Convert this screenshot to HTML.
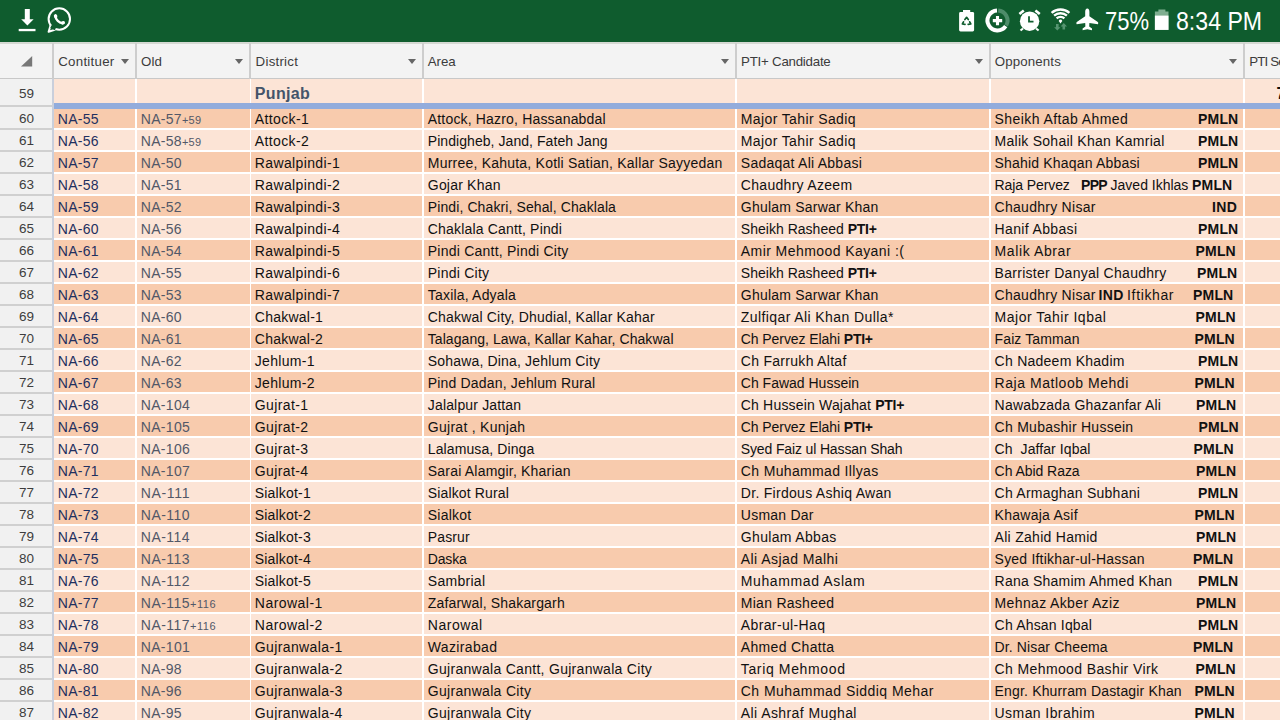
<!DOCTYPE html>
<html><head><meta charset="utf-8"><title>Sheet</title>
<style>
html,body{margin:0;padding:0}
body{width:1280px;height:720px;overflow:hidden;position:relative;background:#fff;font-family:"Liberation Sans",sans-serif;}
div,span,svg{position:absolute;white-space:pre}
span span{position:static}
.sb{left:0;top:0;width:1280px;height:41.7px;background:#0f5c2e}
.sl{left:0;top:41.7px;width:1280px;height:1.9px;background:#d4d8d2}
.st{color:#fff;font-size:25px;line-height:30px;top:6px;transform-origin:0 50%}
.hd,.hs,.ht,.ar,.sl{z-index:2}
.hd{left:0;top:42px;width:1280px;height:36px;background:#f3f3f3;border-bottom:1.5px solid #c8c8c8;box-sizing:content-box}
.hs{top:43px;width:2px;height:36px;background:#cdcdcd}
.ht{top:43px;height:36px;line-height:37px;font-size:13.3px;color:#3c3c3c}
.ar{top:58.5px;width:0;height:0;border-left:4.3px solid transparent;border-right:4.3px solid transparent;border-top:5px solid #666}
.rh{left:0;top:78px;width:52px;height:642px;background:#f1f1f1}
.rb{left:52px;top:79px;width:2px;height:641px;background:#c9cfdc}
.rn{left:0;width:53px;text-align:center;font-size:13.5px;color:#3d3d3d;height:22px;line-height:22px}
.rl{left:0;width:52px;height:2px;background:#d0d0d0}
.r{left:54px;width:1226px;height:20px}
.d{background:#f8cbad}
.l{background:#fce4d6}
.vs{top:79px;width:2px;height:641px;background:#fff}
.c{top:-0.1px;height:22px;line-height:22px;font-size:14.0px;color:#111}
.a{color:#1f3060}
.o{color:#525868}
.b{font-weight:bold}
.s{font-size:11.0px}
</style></head><body>

<div class="sb"></div>
<svg style="left:0;top:0" width="1280" height="42" viewBox="0 0 1280 42">
<g fill="#fff">
<rect x="24.8" y="9" width="5" height="11"/><path d="M21.2 19.2H33.6L27.4 25.5z"/><rect x="18.7" y="28.9" width="16.8" height="2.3"/>
</g>
<g fill="none" stroke="#fff">
<circle cx="59.3" cy="19" r="10.7" stroke-width="2"/>
<path d="M50.6 25.2L48.6 31.8L55.4 29.6" stroke-width="2" stroke-linejoin="round" fill="#0f5c2e"/>
<path d="M55.4 16.2C55.6 19.6 59 23 63 23.2" stroke-width="2.3" stroke-linecap="round"/>
</g>
<rect x="51" y="24" width="5" height="5" fill="#0f5c2e" transform="rotate(28 53 27)"/>
<ellipse cx="55.6" cy="16.2" rx="1.7" ry="2.1" fill="#fff" transform="rotate(-20 55.6 16.2)"/>
<ellipse cx="63" cy="22.8" rx="2.1" ry="1.7" fill="#fff" transform="rotate(-25 63 22.8)"/>
<g fill="#fff">
<rect x="959.1" y="12" width="15" height="19.5" rx="1.4"/><rect x="963" y="10" width="7.2" height="3"/>
</g>
<g fill="none" stroke="#0f5c2e" stroke-width="1.7" stroke-linejoin="round" stroke-linecap="round">
<path d="M964.900 19.500L966.600 17.300L968.300 19.500"/>
<path d="M963.500 21.800L962.400 24L965 24.300"/>
<path d="M969.700 21.800L970.800 24L968.200 24.300"/>
</g>
<g fill="none" stroke-width="4">
<path d="M1005.7 26.2A10 10 0 1 1 997 10.5" stroke="#fff"/>
<path d="M998.2 10.5A10 10 0 0 1 1006.2 25.4" stroke="#4d8c69"/>
</g>
<path d="M992.8 20.6H1002.2M997.5 15.9V25.3" stroke="#fff" stroke-width="3.1" fill="none"/>
<g>
<circle cx="1029.6" cy="21.2" r="9.7" fill="#fff"/>
<path d="M1019.4 14L1023.8 10.5M1035.4 10.5L1039.8 14.1" stroke="#fff" stroke-width="2.6" fill="none"/>
<path d="M1020.5 30.6L1023 28.4M1038.6 30.6L1036.1 28.4" stroke="#fff" stroke-width="2" fill="none"/>
<path d="M1029 16.2V21.6H1033.5" stroke="#0f5c2e" stroke-width="1.8" fill="none"/>
</g>
<g fill="none" stroke="#fff" stroke-width="2.4">
<path d="M1051.6 12.9A13.3 13.3 0 0 1 1069.4 12.9"/>
<path d="M1054.1 15.7A9.6 9.6 0 0 1 1066.9 15.7"/>
<path d="M1056.6 18.4A5.9 5.9 0 0 1 1064.4 18.4"/>
</g>
<path d="M1058.7 20.9A1.9 1.9 0 0 1 1062.3 20.9L1060.5 23.4z" fill="#fff"/>
<g fill="#559470"><path d="M1056 24h2.6v3.200h1.900l-3.200 3.300-3.200-3.300h1.900z"/><path d="M1062.500 29.600h2.600v-3.200h1.900l-3.200-3.300-3.200 3.300h1.900z"/></g>
<path fill="#fff" d="M1087.3 8.600C1088.700 8.600 1089.400 10.200 1089.400 11.800L1089.400 16.200L1097.800 21.900Q1098.800 22.800 1097.900 24.200L1089.400 22.900L1089.200 26.400L1092 28.600L1092 30.200L1087.300 29.200L1082.600 30.200L1082.600 28.600L1085.400 26.400L1085.200 22.900L1076.700 24.200Q1075.800 22.800 1076.800 21.900L1085.200 16.200L1085.200 11.800C1085.200 10.200 1085.900 8.600 1087.300 8.600Z"/>
<rect x="1158.4" y="9.5" width="7" height="3" fill="#7fae90"/>
<rect x="1154.9" y="11.5" width="13.6" height="18.4" fill="#7fae90"/>
<rect x="1154.9" y="15.6" width="13.6" height="14.3" fill="#fff"/>
</svg>
<span class="st" style="left:1105px;transform:scaleX(.88)">75%</span>
<span class="st" style="left:1176px;transform:scaleX(.925)">8:34 PM</span>
<div class="hd"></div><div class="sl"></div>
<div class="hs" style="left:52px"></div>
<div class="hs" style="left:135px"></div>
<div class="hs" style="left:249.3px"></div>
<div class="hs" style="left:422px"></div>
<div class="hs" style="left:735px"></div>
<div class="hs" style="left:989px"></div>
<div class="hs" style="left:1243px"></div>
<svg style="left:21px;top:56.4px;z-index:3" width="12" height="11" viewBox="0 0 12 11"><path d="M11.200 0V10.400H0z" fill="#777"/></svg>
<span class="ht" style="left:58.2px"><span style="letter-spacing:0.27px">Contituer</span></span>
<div class="ar" style="left:121.0px"></div>
<span class="ht" style="left:141.1px"><span style="letter-spacing:0.04px">Old</span></span>
<div class="ar" style="left:234.8px"></div>
<span class="ht" style="left:255.6px"><span style="letter-spacing:0.24px">District</span></span>
<div class="ar" style="left:408.0px"></div>
<span class="ht" style="left:427.8px"><span style="letter-spacing:-0.08px">Area</span></span>
<div class="ar" style="left:721.0px"></div>
<span class="ht" style="left:741.1px"><span style="letter-spacing:-0.24px">PTI+ Candidate</span></span>
<div class="ar" style="left:975.0px"></div>
<span class="ht" style="left:994.8px"><span style="letter-spacing:0.12px">Opponents</span></span>
<div class="ar" style="left:1228.6px"></div>
<span class="ht" style="left:1249.2px"><span style="letter-spacing:-0.82px">PTI Se</span></span>
<div class="rh"></div><div class="rb"></div>
<div class="r l" style="top:79px;height:24.5px"><span class="c b" style="left:200.8px;top:3.5px;font-size:16.0px;color:#44546a;letter-spacing:0.35px">Punjab</span><span class="c b" style="left:1222.6px;top:3.5px;font-size:16.0px">7</span></div>
<span class="rn" style="top:83px">59</span>
<div class="rl" style="top:104.7px"></div>
<div class="r d" style="top:108.2px"><span class="c a" style="left:3.8px"><span style="letter-spacing:0.28px">NA-55</span></span><span class="c o" style="left:86.8px"><span style="letter-spacing:0.28px">NA-57</span><span class="s" style="letter-spacing:0.28px">+59</span></span><span class="c" style="left:200.8px"><span style="letter-spacing:0.38px">Attock-1</span></span><span class="c" style="left:373.8px"><span style="letter-spacing:0.17px">Attock, Hazro, Hassanabdal</span></span><span class="c" style="left:686.8px"><span style="letter-spacing:0.38px">Major Tahir Sadiq</span></span><span class="c" style="left:940.6px"><span style="letter-spacing:0.42px">Sheikh Aftab Ahmed</span></span><span class="c" style="left:1144.1px"><span class="b" style="letter-spacing:0.15px">PMLN</span></span></div>
<span class="rn" style="top:108.2px">60</span>
<div class="rl" style="top:128.0px"></div>
<div class="r l" style="top:130.2px"><span class="c a" style="left:3.8px"><span style="letter-spacing:0.28px">NA-56</span></span><span class="c o" style="left:86.8px"><span style="letter-spacing:0.28px">NA-58</span><span class="s" style="letter-spacing:0.28px">+59</span></span><span class="c" style="left:200.8px"><span style="letter-spacing:0.38px">Attock-2</span></span><span class="c" style="left:373.8px"><span style="letter-spacing:0.06px">Pindigheb, Jand, Fateh Jang</span></span><span class="c" style="left:686.8px"><span style="letter-spacing:0.38px">Major Tahir Sadiq</span></span><span class="c" style="left:940.6px"><span style="letter-spacing:0.26px">Malik Sohail Khan Kamrial</span></span><span class="c" style="left:1144.1px"><span class="b" style="letter-spacing:0.15px">PMLN</span></span></div>
<span class="rn" style="top:130.2px">61</span>
<div class="rl" style="top:150.0px"></div>
<div class="r d" style="top:152.2px"><span class="c a" style="left:3.8px"><span style="letter-spacing:0.28px">NA-57</span></span><span class="c o" style="left:86.8px"><span style="letter-spacing:0.28px">NA-50</span></span><span class="c" style="left:200.8px"><span style="letter-spacing:0.37px">Rawalpindi-1</span></span><span class="c" style="left:373.8px"><span style="letter-spacing:0.22px">Murree, Kahuta, Kotli Satian, Kallar Sayyedan</span></span><span class="c" style="left:686.8px"><span style="letter-spacing:0.25px">Sadaqat Ali Abbasi</span></span><span class="c" style="left:940.6px"><span style="letter-spacing:0.18px">Shahid Khaqan Abbasi</span></span><span class="c" style="left:1144.1px"><span class="b" style="letter-spacing:0.15px">PMLN</span></span></div>
<span class="rn" style="top:152.2px">62</span>
<div class="rl" style="top:172.0px"></div>
<div class="r l" style="top:174.2px"><span class="c a" style="left:3.8px"><span style="letter-spacing:0.28px">NA-58</span></span><span class="c o" style="left:86.8px"><span style="letter-spacing:0.28px">NA-51</span></span><span class="c" style="left:200.8px"><span style="letter-spacing:0.37px">Rawalpindi-2</span></span><span class="c" style="left:373.8px"><span style="letter-spacing:0.2px">Gojar Khan</span></span><span class="c" style="left:686.8px"><span style="letter-spacing:0.3px">Chaudhry Azeem</span></span><span class="c" style="left:940.6px"><span style="letter-spacing:-0.1px">Raja Pervez</span></span><span class="c" style="left:1027.1px"><span class="b" style="letter-spacing:-0.72px">PPP</span></span><span class="c" style="left:1056.6px"><span style="letter-spacing:-0.01px">Javed Ikhlas</span></span><span class="c" style="left:1138.1px"><span class="b" style="letter-spacing:0.15px">PMLN</span></span></div>
<span class="rn" style="top:174.2px">63</span>
<div class="rl" style="top:194.0px"></div>
<div class="r d" style="top:196.2px"><span class="c a" style="left:3.8px"><span style="letter-spacing:0.28px">NA-59</span></span><span class="c o" style="left:86.8px"><span style="letter-spacing:0.28px">NA-52</span></span><span class="c" style="left:200.8px"><span style="letter-spacing:0.37px">Rawalpindi-3</span></span><span class="c" style="left:373.8px"><span style="letter-spacing:0.1px">Pindi, Chakri, Sehal, Chaklala</span></span><span class="c" style="left:686.8px"><span style="letter-spacing:0.22px">Ghulam Sarwar Khan</span></span><span class="c" style="left:940.6px"><span style="letter-spacing:0.27px">Chaudhry Nisar</span></span><span class="c" style="left:1158.1px"><span class="b" style="letter-spacing:0.35px">IND</span></span></div>
<span class="rn" style="top:196.2px">64</span>
<div class="rl" style="top:216.0px"></div>
<div class="r l" style="top:218.2px"><span class="c a" style="left:3.8px"><span style="letter-spacing:0.28px">NA-60</span></span><span class="c o" style="left:86.8px"><span style="letter-spacing:0.28px">NA-56</span></span><span class="c" style="left:200.8px"><span style="letter-spacing:0.37px">Rawalpindi-4</span></span><span class="c" style="left:373.8px"><span style="letter-spacing:0.17px">Chaklala Cantt, Pindi</span></span><span class="c" style="left:686.8px"><span style="letter-spacing:0.02px">Sheikh Rasheed </span><span class="b" style="letter-spacing:-0.25px">PTI+</span></span><span class="c" style="left:940.6px"><span style="letter-spacing:0.35px">Hanif Abbasi</span></span><span class="c" style="left:1144.1px"><span class="b" style="letter-spacing:0.15px">PMLN</span></span></div>
<span class="rn" style="top:218.2px">65</span>
<div class="rl" style="top:238.0px"></div>
<div class="r d" style="top:240.2px"><span class="c a" style="left:3.8px"><span style="letter-spacing:0.28px">NA-61</span></span><span class="c o" style="left:86.8px"><span style="letter-spacing:0.28px">NA-54</span></span><span class="c" style="left:200.8px"><span style="letter-spacing:0.37px">Rawalpindi-5</span></span><span class="c" style="left:373.8px"><span style="letter-spacing:0.23px">Pindi Cantt, Pindi City</span></span><span class="c" style="left:686.8px"><span style="letter-spacing:0.43px">Amir Mehmood Kayani :(</span></span><span class="c" style="left:940.6px"><span style="letter-spacing:0.6px">Malik Abrar</span></span><span class="c" style="left:1141.6px"><span class="b" style="letter-spacing:0.15px">PMLN</span></span></div>
<span class="rn" style="top:240.2px">66</span>
<div class="rl" style="top:260.0px"></div>
<div class="r l" style="top:262.2px"><span class="c a" style="left:3.8px"><span style="letter-spacing:0.28px">NA-62</span></span><span class="c o" style="left:86.8px"><span style="letter-spacing:0.28px">NA-55</span></span><span class="c" style="left:200.8px"><span style="letter-spacing:0.37px">Rawalpindi-6</span></span><span class="c" style="left:373.8px"><span style="letter-spacing:0.24px">Pindi City</span></span><span class="c" style="left:686.8px"><span style="letter-spacing:0.02px">Sheikh Rasheed </span><span class="b" style="letter-spacing:-0.25px">PTI+</span></span><span class="c" style="left:940.6px"><span style="letter-spacing:0.28px">Barrister Danyal Chaudhry</span></span><span class="c" style="left:1143.1px"><span class="b" style="letter-spacing:0.15px">PMLN</span></span></div>
<span class="rn" style="top:262.2px">67</span>
<div class="rl" style="top:282.0px"></div>
<div class="r d" style="top:284.2px"><span class="c a" style="left:3.8px"><span style="letter-spacing:0.28px">NA-63</span></span><span class="c o" style="left:86.8px"><span style="letter-spacing:0.28px">NA-53</span></span><span class="c" style="left:200.8px"><span style="letter-spacing:0.37px">Rawalpindi-7</span></span><span class="c" style="left:373.8px"><span style="letter-spacing:0.19px">Taxila, Adyala</span></span><span class="c" style="left:686.8px"><span style="letter-spacing:0.22px">Ghulam Sarwar Khan</span></span><span class="c" style="left:940.6px"><span style="letter-spacing:0.27px">Chaudhry Nisar</span></span><span class="c" style="left:1044.6px"><span class="b" style="letter-spacing:0.35px">IND</span></span><span class="c" style="left:1073.1px"><span style="letter-spacing:0.63px">Iftikhar</span></span><span class="c" style="left:1139.1px"><span class="b" style="letter-spacing:0.15px">PMLN</span></span></div>
<span class="rn" style="top:284.2px">68</span>
<div class="rl" style="top:304.0px"></div>
<div class="r l" style="top:306.2px"><span class="c a" style="left:3.8px"><span style="letter-spacing:0.28px">NA-64</span></span><span class="c o" style="left:86.8px"><span style="letter-spacing:0.28px">NA-60</span></span><span class="c" style="left:200.8px"><span style="letter-spacing:0.24px">Chakwal-1</span></span><span class="c" style="left:373.8px"><span style="letter-spacing:0.18px">Chakwal City, Dhudial, Kallar Kahar</span></span><span class="c" style="left:686.8px"><span style="letter-spacing:0.41px">Zulfiqar Ali Khan Dulla*</span></span><span class="c" style="left:940.6px"><span style="letter-spacing:0.5px">Major Tahir Iqbal</span></span><span class="c" style="left:1141.6px"><span class="b" style="letter-spacing:0.15px">PMLN</span></span></div>
<span class="rn" style="top:306.2px">69</span>
<div class="rl" style="top:326.0px"></div>
<div class="r d" style="top:328.2px"><span class="c a" style="left:3.8px"><span style="letter-spacing:0.28px">NA-65</span></span><span class="c o" style="left:86.8px"><span style="letter-spacing:0.28px">NA-61</span></span><span class="c" style="left:200.8px"><span style="letter-spacing:0.24px">Chakwal-2</span></span><span class="c" style="left:373.8px"><span style="letter-spacing:0.06px">Talagang, Lawa, Kallar Kahar, Chakwal</span></span><span class="c" style="left:686.8px"><span style="letter-spacing:-0.08px">Ch Pervez Elahi </span><span class="b" style="letter-spacing:-0.25px">PTI+</span></span><span class="c" style="left:940.6px"><span style="letter-spacing:0.11px">Faiz Tamman</span></span><span class="c" style="left:1140.6px"><span class="b" style="letter-spacing:0.15px">PMLN</span></span></div>
<span class="rn" style="top:328.2px">70</span>
<div class="rl" style="top:348.0px"></div>
<div class="r l" style="top:350.2px"><span class="c a" style="left:3.8px"><span style="letter-spacing:0.28px">NA-66</span></span><span class="c o" style="left:86.8px"><span style="letter-spacing:0.28px">NA-62</span></span><span class="c" style="left:200.8px"><span style="letter-spacing:0.31px">Jehlum-1</span></span><span class="c" style="left:373.8px"><span style="letter-spacing:0.17px">Sohawa, Dina, Jehlum City</span></span><span class="c" style="left:686.8px"><span style="letter-spacing:0.29px">Ch Farrukh Altaf</span></span><span class="c" style="left:940.6px"><span style="letter-spacing:0.25px">Ch Nadeem Khadim</span></span><span class="c" style="left:1144.1px"><span class="b" style="letter-spacing:0.15px">PMLN</span></span></div>
<span class="rn" style="top:350.2px">71</span>
<div class="rl" style="top:370.0px"></div>
<div class="r d" style="top:372.2px"><span class="c a" style="left:3.8px"><span style="letter-spacing:0.28px">NA-67</span></span><span class="c o" style="left:86.8px"><span style="letter-spacing:0.28px">NA-63</span></span><span class="c" style="left:200.8px"><span style="letter-spacing:0.31px">Jehlum-2</span></span><span class="c" style="left:373.8px"><span style="letter-spacing:0.17px">Pind Dadan, Jehlum Rural</span></span><span class="c" style="left:686.8px"><span>Ch Fawad Hussein</span></span><span class="c" style="left:940.6px"><span style="letter-spacing:0.54px">Raja Matloob Mehdi</span></span><span class="c" style="left:1140.6px"><span class="b" style="letter-spacing:0.15px">PMLN</span></span></div>
<span class="rn" style="top:372.2px">72</span>
<div class="rl" style="top:392.0px"></div>
<div class="r l" style="top:394.2px"><span class="c a" style="left:3.8px"><span style="letter-spacing:0.28px">NA-68</span></span><span class="c o" style="left:86.8px"><span style="letter-spacing:0.3px">NA-104</span></span><span class="c" style="left:200.8px"><span style="letter-spacing:0.38px">Gujrat-1</span></span><span class="c" style="left:373.8px"><span style="letter-spacing:0.16px">Jalalpur Jattan</span></span><span class="c" style="left:686.8px"><span style="letter-spacing:0.18px">Ch Hussein Wajahat </span><span class="b" style="letter-spacing:-0.25px">PTI+</span></span><span class="c" style="left:940.6px"><span style="letter-spacing:0.2px">Nawabzada Ghazanfar Ali</span></span><span class="c" style="left:1142.1px"><span class="b" style="letter-spacing:0.15px">PMLN</span></span></div>
<span class="rn" style="top:394.2px">73</span>
<div class="rl" style="top:414.0px"></div>
<div class="r d" style="top:416.2px"><span class="c a" style="left:3.8px"><span style="letter-spacing:0.28px">NA-69</span></span><span class="c o" style="left:86.8px"><span style="letter-spacing:0.3px">NA-105</span></span><span class="c" style="left:200.8px"><span style="letter-spacing:0.38px">Gujrat-2</span></span><span class="c" style="left:373.8px"><span style="letter-spacing:0.28px">Gujrat , Kunjah</span></span><span class="c" style="left:686.8px"><span style="letter-spacing:-0.08px">Ch Pervez Elahi </span><span class="b" style="letter-spacing:-0.25px">PTI+</span></span><span class="c" style="left:940.6px"><span style="letter-spacing:0.26px">Ch Mubashir Hussein</span></span><span class="c" style="left:1144.6px"><span class="b" style="letter-spacing:0.15px">PMLN</span></span></div>
<span class="rn" style="top:416.2px">74</span>
<div class="rl" style="top:436.0px"></div>
<div class="r l" style="top:438.2px"><span class="c a" style="left:3.8px"><span style="letter-spacing:0.28px">NA-70</span></span><span class="c o" style="left:86.8px"><span style="letter-spacing:0.3px">NA-106</span></span><span class="c" style="left:200.8px"><span style="letter-spacing:0.38px">Gujrat-3</span></span><span class="c" style="left:373.8px"><span style="letter-spacing:0.1px">Lalamusa, Dinga</span></span><span class="c" style="left:686.8px"><span style="letter-spacing:-0.14px">Syed Faiz ul Hassan Shah</span></span><span class="c" style="left:940.6px"><span style="letter-spacing:0.08px">Ch  Jaffar Iqbal</span></span><span class="c" style="left:1139.6px"><span class="b" style="letter-spacing:0.15px">PMLN</span></span></div>
<span class="rn" style="top:438.2px">75</span>
<div class="rl" style="top:458.0px"></div>
<div class="r d" style="top:460.2px"><span class="c a" style="left:3.8px"><span style="letter-spacing:0.28px">NA-71</span></span><span class="c o" style="left:86.8px"><span style="letter-spacing:0.3px">NA-107</span></span><span class="c" style="left:200.8px"><span style="letter-spacing:0.38px">Gujrat-4</span></span><span class="c" style="left:373.8px"><span style="letter-spacing:0.2px">Sarai Alamgir, Kharian</span></span><span class="c" style="left:686.8px"><span style="letter-spacing:0.35px">Ch Muhammad Illyas</span></span><span class="c" style="left:940.6px"><span style="letter-spacing:-0.05px">Ch Abid Raza</span></span><span class="c" style="left:1142.1px"><span class="b" style="letter-spacing:0.15px">PMLN</span></span></div>
<span class="rn" style="top:460.2px">76</span>
<div class="rl" style="top:480.0px"></div>
<div class="r l" style="top:482.2px"><span class="c a" style="left:3.8px"><span style="letter-spacing:0.28px">NA-72</span></span><span class="c o" style="left:86.8px"><span style="letter-spacing:0.65px">NA-111</span></span><span class="c" style="left:200.8px"><span style="letter-spacing:0.18px">Sialkot-1</span></span><span class="c" style="left:373.8px"><span style="letter-spacing:0.14px">Sialkot Rural</span></span><span class="c" style="left:686.8px"><span style="letter-spacing:0.29px">Dr. Firdous Ashiq Awan</span></span><span class="c" style="left:940.6px"><span style="letter-spacing:0.24px">Ch Armaghan Subhani</span></span><span class="c" style="left:1144.1px"><span class="b" style="letter-spacing:0.15px">PMLN</span></span></div>
<span class="rn" style="top:482.2px">77</span>
<div class="rl" style="top:502.0px"></div>
<div class="r d" style="top:504.2px"><span class="c a" style="left:3.8px"><span style="letter-spacing:0.28px">NA-73</span></span><span class="c o" style="left:86.8px"><span style="letter-spacing:0.47px">NA-110</span></span><span class="c" style="left:200.8px"><span style="letter-spacing:0.18px">Sialkot-2</span></span><span class="c" style="left:373.8px"><span style="letter-spacing:0.2px">Sialkot</span></span><span class="c" style="left:686.8px"><span style="letter-spacing:0.24px">Usman Dar</span></span><span class="c" style="left:940.6px"><span style="letter-spacing:0.26px">Khawaja Asif</span></span><span class="c" style="left:1140.6px"><span class="b" style="letter-spacing:0.15px">PMLN</span></span></div>
<span class="rn" style="top:504.2px">78</span>
<div class="rl" style="top:524.0px"></div>
<div class="r l" style="top:526.2px"><span class="c a" style="left:3.8px"><span style="letter-spacing:0.28px">NA-74</span></span><span class="c o" style="left:86.8px"><span style="letter-spacing:0.47px">NA-114</span></span><span class="c" style="left:200.8px"><span style="letter-spacing:0.18px">Sialkot-3</span></span><span class="c" style="left:373.8px"><span style="letter-spacing:0.11px">Pasrur</span></span><span class="c" style="left:686.8px"><span style="letter-spacing:0.33px">Ghulam Abbas</span></span><span class="c" style="left:940.6px"><span style="letter-spacing:0.28px">Ali Zahid Hamid</span></span><span class="c" style="left:1142.1px"><span class="b" style="letter-spacing:0.15px">PMLN</span></span></div>
<span class="rn" style="top:526.2px">79</span>
<div class="rl" style="top:546.0px"></div>
<div class="r d" style="top:548.2px"><span class="c a" style="left:3.8px"><span style="letter-spacing:0.28px">NA-75</span></span><span class="c o" style="left:86.8px"><span style="letter-spacing:0.47px">NA-113</span></span><span class="c" style="left:200.8px"><span style="letter-spacing:0.18px">Sialkot-4</span></span><span class="c" style="left:373.8px"><span style="letter-spacing:-0.16px">Daska</span></span><span class="c" style="left:686.8px"><span style="letter-spacing:0.43px">Ali Asjad Malhi</span></span><span class="c" style="left:940.6px"><span style="letter-spacing:0.2px">Syed Iftikhar-ul-Hassan</span></span><span class="c" style="left:1139.1px"><span class="b" style="letter-spacing:0.15px">PMLN</span></span></div>
<span class="rn" style="top:548.2px">80</span>
<div class="rl" style="top:568.0px"></div>
<div class="r l" style="top:570.2px"><span class="c a" style="left:3.8px"><span style="letter-spacing:0.28px">NA-76</span></span><span class="c o" style="left:86.8px"><span style="letter-spacing:0.47px">NA-112</span></span><span class="c" style="left:200.8px"><span style="letter-spacing:0.18px">Sialkot-5</span></span><span class="c" style="left:373.8px"><span style="letter-spacing:0.28px">Sambrial</span></span><span class="c" style="left:686.8px"><span style="letter-spacing:0.61px">Muhammad Aslam</span></span><span class="c" style="left:940.6px"><span style="letter-spacing:0.22px">Rana Shamim Ahmed Khan</span></span><span class="c" style="left:1144.1px"><span class="b" style="letter-spacing:0.15px">PMLN</span></span></div>
<span class="rn" style="top:570.2px">81</span>
<div class="rl" style="top:590.0px"></div>
<div class="r d" style="top:592.2px"><span class="c a" style="left:3.8px"><span style="letter-spacing:0.28px">NA-77</span></span><span class="c o" style="left:86.8px"><span style="letter-spacing:0.47px">NA-115</span><span class="s" style="letter-spacing:0.52px">+116</span></span><span class="c" style="left:200.8px"><span style="letter-spacing:0.47px">Narowal-1</span></span><span class="c" style="left:373.8px"><span style="letter-spacing:0.16px">Zafarwal, Shakargarh</span></span><span class="c" style="left:686.8px"><span style="letter-spacing:0.27px">Mian Rasheed</span></span><span class="c" style="left:940.6px"><span style="letter-spacing:0.36px">Mehnaz Akber Aziz</span></span><span class="c" style="left:1142.1px"><span class="b" style="letter-spacing:0.15px">PMLN</span></span></div>
<span class="rn" style="top:592.2px">82</span>
<div class="rl" style="top:612.0px"></div>
<div class="r l" style="top:614.2px"><span class="c a" style="left:3.8px"><span style="letter-spacing:0.28px">NA-78</span></span><span class="c o" style="left:86.8px"><span style="letter-spacing:0.47px">NA-117</span><span class="s" style="letter-spacing:0.52px">+116</span></span><span class="c" style="left:200.8px"><span style="letter-spacing:0.47px">Narowal-2</span></span><span class="c" style="left:373.8px"><span style="letter-spacing:0.51px">Narowal</span></span><span class="c" style="left:686.8px"><span style="letter-spacing:0.37px">Abrar-ul-Haq</span></span><span class="c" style="left:940.6px"><span style="letter-spacing:0.18px">Ch Ahsan Iqbal</span></span><span class="c" style="left:1144.1px"><span class="b" style="letter-spacing:0.15px">PMLN</span></span></div>
<span class="rn" style="top:614.2px">83</span>
<div class="rl" style="top:634.0px"></div>
<div class="r d" style="top:636.2px"><span class="c a" style="left:3.8px"><span style="letter-spacing:0.28px">NA-79</span></span><span class="c o" style="left:86.8px"><span style="letter-spacing:0.3px">NA-101</span></span><span class="c" style="left:200.8px"><span style="letter-spacing:0.38px">Gujranwala-1</span></span><span class="c" style="left:373.8px"><span style="letter-spacing:0.35px">Wazirabad</span></span><span class="c" style="left:686.8px"><span style="letter-spacing:0.34px">Ahmed Chatta</span></span><span class="c" style="left:940.6px"><span style="letter-spacing:0.12px">Dr. Nisar Cheema</span></span><span class="c" style="left:1139.1px"><span class="b" style="letter-spacing:0.15px">PMLN</span></span></div>
<span class="rn" style="top:636.2px">84</span>
<div class="rl" style="top:656.0px"></div>
<div class="r l" style="top:658.2px"><span class="c a" style="left:3.8px"><span style="letter-spacing:0.28px">NA-80</span></span><span class="c o" style="left:86.8px"><span style="letter-spacing:0.28px">NA-98</span></span><span class="c" style="left:200.8px"><span style="letter-spacing:0.38px">Gujranwala-2</span></span><span class="c" style="left:373.8px"><span style="letter-spacing:0.29px">Gujranwala Cantt, Gujranwala City</span></span><span class="c" style="left:686.8px"><span style="letter-spacing:0.64px">Tariq Mehmood</span></span><span class="c" style="left:940.6px"><span style="letter-spacing:0.38px">Ch Mehmood Bashir Virk</span></span><span class="c" style="left:1141.6px"><span class="b" style="letter-spacing:0.15px">PMLN</span></span></div>
<span class="rn" style="top:658.2px">85</span>
<div class="rl" style="top:678.0px"></div>
<div class="r d" style="top:680.2px"><span class="c a" style="left:3.8px"><span style="letter-spacing:0.28px">NA-81</span></span><span class="c o" style="left:86.8px"><span style="letter-spacing:0.28px">NA-96</span></span><span class="c" style="left:200.8px"><span style="letter-spacing:0.38px">Gujranwala-3</span></span><span class="c" style="left:373.8px"><span style="letter-spacing:0.31px">Gujranwala City</span></span><span class="c" style="left:686.8px"><span style="letter-spacing:0.46px">Ch Muhammad Siddiq Mehar</span></span><span class="c" style="left:940.6px"><span style="letter-spacing:0.16px">Engr. Khurram Dastagir Khan</span></span><span class="c" style="left:1140.6px"><span class="b" style="letter-spacing:0.15px">PMLN</span></span></div>
<span class="rn" style="top:680.2px">86</span>
<div class="rl" style="top:700.0px"></div>
<div class="r l" style="top:702.2px"><span class="c a" style="left:3.8px"><span style="letter-spacing:0.28px">NA-82</span></span><span class="c o" style="left:86.8px"><span style="letter-spacing:0.28px">NA-95</span></span><span class="c" style="left:200.8px"><span style="letter-spacing:0.38px">Gujranwala-4</span></span><span class="c" style="left:373.8px"><span style="letter-spacing:0.31px">Gujranwala City</span></span><span class="c" style="left:686.8px"><span style="letter-spacing:0.42px">Ali Ashraf Mughal</span></span><span class="c" style="left:940.6px"><span style="letter-spacing:0.42px">Usman Ibrahim</span></span><span class="c" style="left:1140.6px"><span class="b" style="letter-spacing:0.15px">PMLN</span></span></div>
<span class="rn" style="top:702.2px">87</span>
<div class="rl" style="top:722.0px"></div>
<div class="vs" style="left:135px;width:2px"></div>
<div class="vs" style="left:249.5px;width:1.5px"></div>
<div class="vs" style="left:422px;width:2px"></div>
<div class="vs" style="left:735px;width:2px"></div>
<div class="vs" style="left:989px;width:2px"></div>
<div class="vs" style="left:1243px;width:2px"></div>
<div style="left:54px;top:103px;width:1226px;height:5.7px;background:#92acdc"></div>
</body></html>
